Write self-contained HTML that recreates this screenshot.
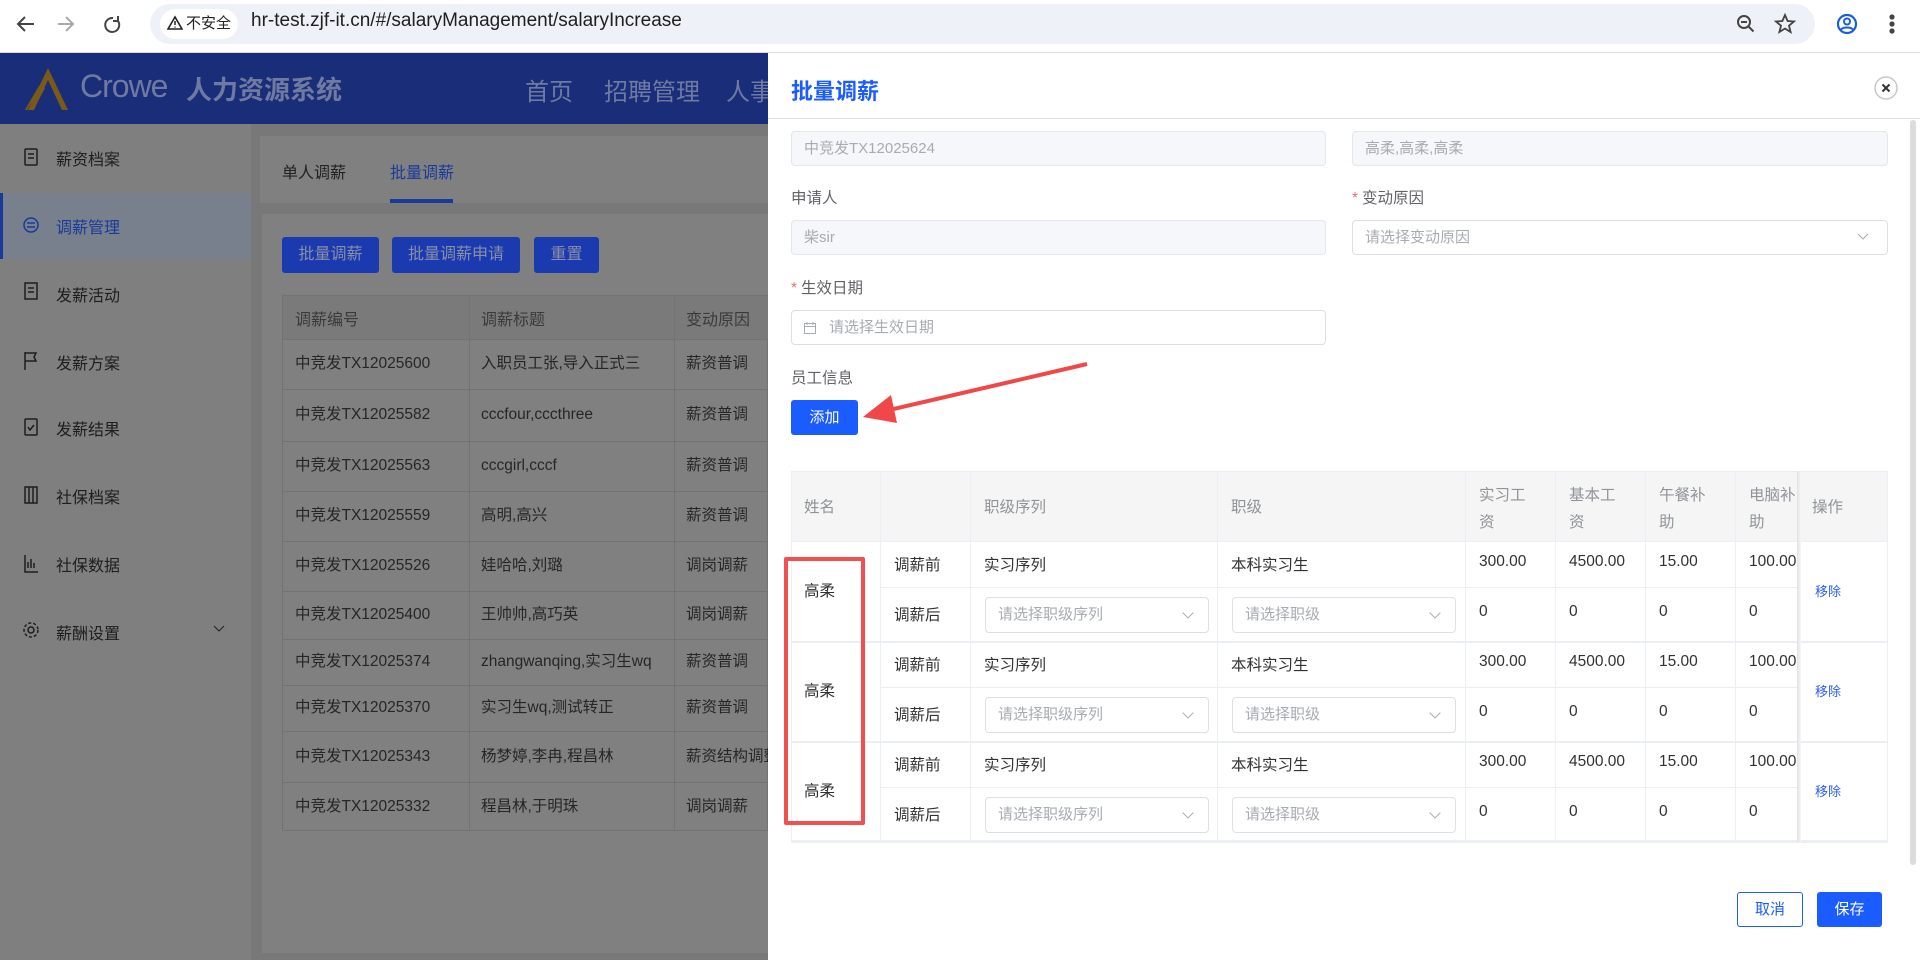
<!DOCTYPE html>
<html><head><meta charset="utf-8">
<style>
*{box-sizing:border-box;margin:0;padding:0}
body{width:1920px;height:960px;overflow:hidden;position:relative;font-family:"Liberation Sans","Noto Sans CJK SC",sans-serif;background:#787878;color:#303133}
.abs{position:absolute}
.chrome{left:0;top:0;width:1920px;height:53px;background:#fff;border-bottom:1px solid #ddd}
.pill{left:150px;top:4px;width:1665px;height:40px;border-radius:20px;background:#eef1f7}
.hdr{left:0;top:53px;width:768px;height:71px;background:#1a2d78}
.side{left:0;top:124px;width:251px;height:836px;background:#7f7f7f}
.si{position:absolute;left:56px;font-size:16px;color:#1e1e1e}
.card{background:#808080}
.drawer{left:768px;top:53px;width:1152px;height:907px;background:#fff}
.inp{position:absolute;height:35px;border:1px solid #dcdfe6;border-radius:4px;font-size:15px;color:#a8abb2;padding-left:12px;line-height:33px}
.dis{background:#f5f7fa;border-color:#e4e7ed}
.lbl{position:absolute;font-size:15.5px;color:#606266}
.star{color:#f56c6c;margin-right:4px}
.cell{position:absolute;font-size:15.5px;color:#303133}
.hl{position:absolute;background:#ebeef5}
.sel{position:absolute;width:224px;height:36px;border:1px solid #dcdfe6;border-radius:4px;font-size:15px;color:#a8abb2;padding-left:12px;line-height:34px}
.sel:after{content:"";position:absolute;right:16px;top:11px;width:7px;height:7px;border-right:1px solid #a8abb2;border-bottom:1px solid #a8abb2;transform:rotate(45deg)}
.rm{position:absolute;left:1815px;font-size:13px;color:#2a5cf5}
.nav{position:absolute;top:72px;font-size:24px;color:#6f7aa2}
</style></head><body>
<div class="abs chrome"></div>
<div class="abs pill"></div>
<svg class="abs" style="left:14px;top:12px" width="120" height="24" viewBox="0 0 120 24" fill="none" stroke="#444" stroke-width="2"><path d="M20 12H5M11 5l-7 7 7 7"/><path d="M58 12H44M52 5l7 7-7 7" stroke="#aaa"/><path d="M99 6a7 7 0 1 0 5 3M104 4v5h-5"/></svg>
<div class="abs" style="left:160px;top:9px;width:78px;height:30px;border-radius:15px;background:#fff;font-size:15px;line-height:30px;padding-left:26px;color:#222">不安全</div>
<svg class="abs" style="left:167px;top:15px" width="16" height="16"><path d="M8 2L1 14h14z" fill="none" stroke="#222" stroke-width="1.6"/><path d="M8 6v4M8 11.5v1" stroke="#222" stroke-width="1.5"/></svg>
<div class="abs" style="left:251px;top:10px;font-size:19px;color:#1f1f1f">hr-test.zjf-it.cn/#/salaryManagement/salaryIncrease</div>
<svg class="abs" style="left:1734px;top:12px" width="180" height="26" fill="none" stroke="#444" stroke-width="2"><circle cx="10" cy="10" r="6"/><path d="M7 10h6M14.5 14.5l5 5"/><path d="M51 3l2.6 6 6.4.5-5 4.2 1.6 6.3L51 16.5 45.4 20l1.6-6.3-5-4.2 6.4-.5z" stroke-width="1.8"/><circle cx="113" cy="12" r="9" stroke="#1a5fd6" stroke-width="2.2"/><circle cx="113" cy="9.5" r="3" stroke="#1a5fd6" stroke-width="2"/><path d="M107 17.5a7 4 0 0 1 12 0" stroke="#1a5fd6" stroke-width="2"/><circle cx="158" cy="5" r="1.6" fill="#444"/><circle cx="158" cy="12" r="1.6" fill="#444"/><circle cx="158" cy="19" r="1.6" fill="#444"/></svg>

<div class="abs hdr"></div>
<svg class="abs" style="left:22px;top:66px" width="50" height="46"><path d="M26 2L6 44h6L26 14l14 30h6z" fill="#7a5a18"/><path d="M18 20L4 44M22 22L10 44" stroke="#7a5a18" stroke-width="2"/></svg>
<div class="abs" style="left:80px;top:68px;font-size:32px;color:#6f7aa2;letter-spacing:-1px">Crowe</div>
<div class="abs" style="left:186px;top:70px;font-size:26px;font-weight:bold;color:#6f7aa2">人力资源系统</div>
<div class="nav" style="left:525px">首页</div>
<div class="nav" style="left:604px">招聘管理</div>
<div class="nav" style="left:726px">人事</div>

<div class="abs side"></div>
<div class="abs" style="left:0;top:193px;width:251px;height:66px;background:#77808c;border-left:3px solid #1a3a9a"></div>
<div class="si" style="top:146px">薪资档案</div>
<div class="si" style="top:214px;color:#1a3a9a">调薪管理</div>
<div class="si" style="top:282px">发薪活动</div>
<div class="si" style="top:350px">发薪方案</div>
<div class="si" style="top:416px">发薪结果</div>
<div class="si" style="top:484px">社保档案</div>
<div class="si" style="top:552px">社保数据</div>
<div class="si" style="top:620px">薪酬设置</div>
<svg class="abs" style="left:22px;top:148px" width="20" height="500" fill="none" stroke="#1e1e1e" stroke-width="1.5"><rect x="3" y="1" width="12" height="16" rx="1"/><path d="M6 6h6M6 10h6"/><circle cx="9" cy="77" r="7" stroke="#1a3a9a"/><path d="M5 75h8M5 79h8" stroke="#1a3a9a"/><rect x="3" y="135" width="12" height="16"/><path d="M6 140h6M6 144h6"/><path d="M3 204v18M3 205h11l-2 4 2 4H3"/><rect x="3" y="271" width="12" height="16" rx="1"/><path d="M6 279l2 3 4-5"/><rect x="3" y="339" width="12" height="16"/><path d="M7 339v16M11 339v16"/><path d="M3 407v17h13M6 420v-6M9 420v-9M12 420v-5"/><circle cx="9" cy="482" r="3"/><circle cx="9" cy="482" r="7" stroke-dasharray="3 2"/></svg>
<svg class="abs" style="left:213px;top:625px" width="12" height="8"><path d="M1 1l5 5 5-5" fill="none" stroke="#222"/></svg>

<div class="abs card" style="left:260px;top:136px;width:508px;height:67px"></div>
<div class="abs" style="left:282px;top:159px;font-size:16px;color:#222">单人调薪</div>
<div class="abs" style="left:390px;top:159px;font-size:16px;color:#1a3a9a">批量调薪</div>
<div class="abs" style="left:390px;top:199px;width:63px;height:4px;background:#1a3a9a"></div>
<div class="abs card" style="left:262px;top:214px;width:506px;height:739px"></div>
<div class="abs" style="left:282px;top:237px;width:97px;height:36px;background:#1c3ab0;border-radius:3px;color:#888fa8;font-size:16px;text-align:center;line-height:36px">批量调薪</div>
<div class="abs" style="left:392px;top:237px;width:128px;height:36px;background:#1c3ab0;border-radius:3px;color:#888fa8;font-size:16px;text-align:center;line-height:36px">批量调薪申请</div>
<div class="abs" style="left:534px;top:237px;width:65px;height:36px;background:#1c3ab0;border-radius:3px;color:#888fa8;font-size:16px;text-align:center;line-height:36px">重置</div>
<div class="abs" style="left:282px;top:295px;width:486px;height:536px;border:1px solid #737373"></div>
<div class="abs" style="left:283px;top:296px;width:485px;height:43px;background:#7a7a7a"></div>
<div class="abs" style="left:469px;top:295px;width:1px;height:536px;background:#737373"></div>
<div class="abs" style="left:674px;top:295px;width:1px;height:536px;background:#737373"></div>
<div id="rows"></div>
<div class="abs" style="left:295px;top:306px;font-size:16px;color:#3a3a3a">调薪编号</div>
<div class="abs" style="left:481px;top:306px;font-size:16px;color:#3a3a3a">调薪标题</div>
<div class="abs" style="left:686px;top:306px;font-size:16px;color:#3a3a3a">变动原因</div>
<script>
var t=[339,389,441,491,541,591,639,685,731,782,831];
var d=[["中竞发TX12025600","入职员工张,导入正式三","薪资普调"],["中竞发TX12025582","cccfour,cccthree","薪资普调"],["中竞发TX12025563","cccgirl,cccf","薪资普调"],["中竞发TX12025559","高明,高兴","薪资普调"],["中竞发TX12025526","娃哈哈,刘璐","调岗调薪"],["中竞发TX12025400","王帅帅,高巧英","调岗调薪"],["中竞发TX12025374","zhangwanqing,实习生wq","薪资普调"],["中竞发TX12025370","实习生wq,测试转正","薪资普调"],["中竞发TX12025343","杨梦婷,李冉,程昌林","薪资结构调整"],["中竞发TX12025332","程昌林,于明珠","调岗调薪"]];
var h="";
for(var i=0;i<10;i++){var y=(t[i]+t[i+1])/2-10;
h+='<div class="abs" style="left:282px;top:'+t[i]+'px;width:486px;height:1px;background:#737373"></div>';
h+='<div class="abs" style="left:295px;top:'+y+'px;font-size:15.5px;line-height:20px;color:#262626">'+d[i][0]+'</div>';
h+='<div class="abs" style="left:481px;top:'+y+'px;font-size:15.5px;line-height:20px;color:#262626;white-space:nowrap">'+d[i][1]+'</div>';
h+='<div class="abs" style="left:686px;top:'+y+'px;font-size:15.5px;line-height:20px;color:#262626;white-space:nowrap;width:82px;overflow:hidden">'+d[i][2]+'</div>';}
document.getElementById('rows').outerHTML=h;
</script>

<div class="abs drawer"></div>
<div class="abs" style="left:791px;top:74px;font-size:22px;font-weight:bold;color:#1a5cff">批量调薪</div>
<svg class="abs" style="left:1874px;top:76px" width="24" height="24"><circle cx="12" cy="12" r="11" fill="#fff" stroke="#c8c8c8" stroke-width="1.5"/><path d="M8.5 8.5l7 7M15.5 8.5l-7 7" stroke="#333" stroke-width="2"/></svg>
<div class="abs" style="left:768px;top:118px;width:1152px;height:1px;background:#dcdfe6"></div>
<div class="abs" style="left:1910px;top:120px;width:6px;height:745px;border-radius:3px;background:#dcdcdc"></div>

<div class="inp dis" style="left:791px;top:131px;width:535px">中竞发TX12025624</div>
<div class="inp dis" style="left:1352px;top:131px;width:536px">高柔,高柔,高柔</div>
<div class="lbl" style="left:791px;top:186px">申请人</div>
<div class="lbl" style="left:1352px;top:186px"><span class="star">*</span>变动原因</div>
<div class="inp dis" style="left:791px;top:220px;width:535px">柴sir</div>
<div class="inp" style="left:1352px;top:220px;width:536px">请选择变动原因</div>
<svg class="abs" style="left:1857px;top:233px" width="12" height="8"><path d="M1 1l5 5 5-5" fill="none" stroke="#a8abb2"/></svg>
<div class="lbl" style="left:791px;top:276px"><span class="star">*</span>生效日期</div>
<div class="inp" style="left:791px;top:310px;width:535px;padding-left:37px">请选择生效日期</div>
<svg class="abs" style="left:803px;top:321px" width="14" height="14" fill="none" stroke="#a8abb2"><rect x="1.5" y="2.5" width="11" height="10"/><path d="M1.5 5.5h11M4 1v3M10 1v3"/></svg>
<div class="lbl" style="left:791px;top:366px">员工信息</div>
<div class="abs" style="left:791px;top:400px;width:67px;height:35px;background:#1a5cff;border-radius:3px;color:#fff;font-size:15px;text-align:center;line-height:35px">添加</div>
<svg class="abs" style="left:855px;top:355px" width="240" height="75"><path d="M232 9L30 56" stroke="#f04848" stroke-width="4"/><path d="M8 62L36 40 42 68z" fill="#f04848"/></svg>

<div class="abs" style="left:791px;top:471px;width:1097px;height:372px;border:1px solid #ebeef5;border-bottom:3px solid #ebeef5"></div>
<div class="abs" style="left:792px;top:472px;width:1095px;height:70px;background:#f5f5f5"></div>
<div class="hl" style="left:791px;top:541px;width:1097px;height:1px"></div>
<div class="hl" style="left:880px;top:587px;width:918px;height:1px"></div>
<div class="hl" style="left:791px;top:641px;width:1097px;height:2px"></div>
<div class="hl" style="left:880px;top:687px;width:918px;height:1px"></div>
<div class="hl" style="left:791px;top:741px;width:1097px;height:2px"></div>
<div class="hl" style="left:880px;top:787px;width:918px;height:1px"></div>
<div class="hl" style="left:880px;top:471px;width:1px;height:371px"></div>
<div class="hl" style="left:970px;top:471px;width:1px;height:371px"></div>
<div class="hl" style="left:1217px;top:471px;width:1px;height:371px"></div>
<div class="hl" style="left:1465px;top:471px;width:1px;height:371px"></div>
<div class="hl" style="left:1555px;top:471px;width:1px;height:371px"></div>
<div class="hl" style="left:1645px;top:471px;width:1px;height:371px"></div>
<div class="hl" style="left:1735px;top:471px;width:1px;height:371px"></div>
<div class="abs" style="left:1797px;top:471px;width:4px;height:371px;background:linear-gradient(90deg,#e2e2e2,#f6f6f6)"></div>

<div class="cell" style="left:804px;top:495px;color:#909399">姓名</div>
<div class="cell" style="left:984px;top:495px;color:#909399">职级序列</div>
<div class="cell" style="left:1231px;top:495px;color:#909399">职级</div>
<div class="cell" style="left:1479px;top:482px;color:#909399;line-height:27px">实习工<br>资</div>
<div class="cell" style="left:1569px;top:482px;color:#909399;line-height:27px">基本工<br>资</div>
<div class="cell" style="left:1659px;top:482px;color:#909399;line-height:27px">午餐补<br>助</div>
<div class="cell" style="left:1749px;top:482px;color:#909399;line-height:27px;width:48px;overflow:hidden;white-space:nowrap">电脑补<br>助</div>
<div class="cell" style="left:1812px;top:495px;color:#909399">操作</div>

<div id="emp"></div>
<script>
var h="";
for(var k=0;k<3;k++){var b=541+k*100;
h+='<div class="cell" style="left:804px;top:'+(b+38)+'px">高柔</div>';
h+='<div class="cell" style="left:894px;top:'+(b+12)+'px">调薪前</div>';
h+='<div class="cell" style="left:984px;top:'+(b+12)+'px">实习序列</div>';
h+='<div class="cell" style="left:1231px;top:'+(b+12)+'px">本科实习生</div>';
h+='<div class="cell" style="left:1479px;top:'+(b+12)+'px">300.00</div>';
h+='<div class="cell" style="left:1569px;top:'+(b+12)+'px">4500.00</div>';
h+='<div class="cell" style="left:1659px;top:'+(b+12)+'px">15.00</div>';
h+='<div class="cell" style="left:1749px;top:'+(b+12)+'px;width:48px;overflow:hidden">100.00</div>';
h+='<div class="cell" style="left:894px;top:'+(b+62)+'px">调薪后</div>';
h+='<div class="sel" style="left:985px;top:'+(b+56)+'px">请选择职级序列</div>';
h+='<div class="sel" style="left:1232px;top:'+(b+56)+'px">请选择职级</div>';
['1479','1569','1659','1749'].forEach(function(x){h+='<div class="cell" style="left:'+x+'px;top:'+(b+62)+'px">0</div>';});
h+='<div class="rm" style="top:'+(b+40)+'px">移除</div>';}
document.getElementById('emp').outerHTML=h;
</script>
<div class="abs" style="left:784px;top:557px;width:81px;height:268px;border:4px solid #f05050;border-radius:2px"></div>

<div class="abs" style="left:1737px;top:892px;width:66px;height:35px;border:1px solid #1a5cff;border-radius:3px;color:#1a5cff;font-size:15px;text-align:center;line-height:33px">取消</div>
<div class="abs" style="left:1817px;top:892px;width:65px;height:35px;background:#1a5cff;border-radius:3px;color:#fff;font-size:15px;text-align:center;line-height:35px">保存</div>
</body></html>
